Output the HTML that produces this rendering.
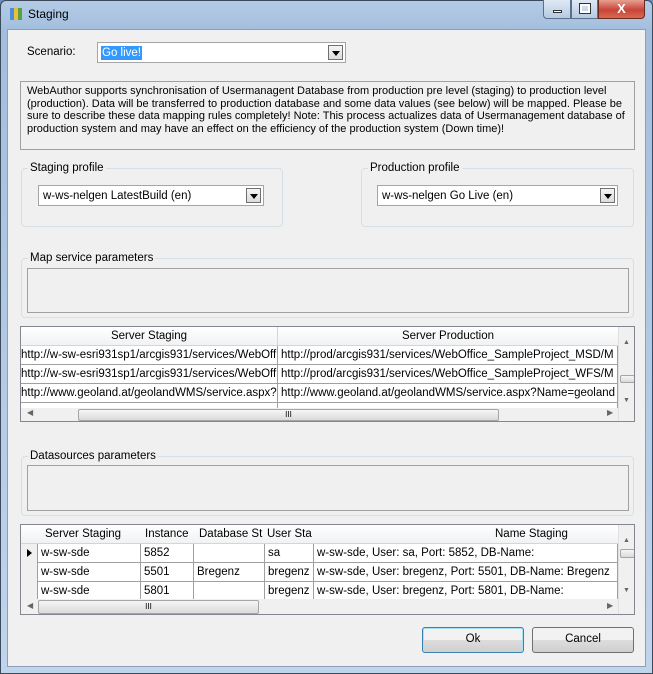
<!DOCTYPE html>
<html><head><style>
*{box-sizing:border-box;margin:0;padding:0}
body{width:653px;height:674px;background:#6d8fb5;font-family:"Liberation Sans",sans-serif;font-size:11.5px;color:#000;position:relative;overflow:hidden}
.a{position:absolute}
.win{left:0;top:0;width:653px;height:674px;background:linear-gradient(#b4cbe6,#a3bedd 30px,#c0d5ec);border:1px solid #3b4a5c;border-radius:6px 6px 0 0}
.body{left:7px;top:29px;width:639px;height:638px;background:#f0f0f0;border:1px solid #8aa0ba}
.combo{background:#fff;border:1px solid #a5a5a5;height:21px}
.btn{position:absolute;right:2px;top:2px;width:15px;height:15px;border:1px solid #6f6f6f;background:linear-gradient(#f4f4f4,#dcdcdc)}
.btn:after{content:"";position:absolute;left:3px;top:5px;border-left:4px solid transparent;border-right:4px solid transparent;border-top:5px solid #000}
.grp{border:1px solid #d5dfe5;border-radius:4px}
.lbl{background:#f0f0f0;padding:0 2px;position:absolute;top:-7px;left:6px}
.grid{background:#fff;border:1px solid #828790;overflow:hidden}
.hd{background:linear-gradient(#fff,#f1f2f4);border-bottom:1px solid #d5d5d5;text-align:center}
.cell{position:absolute;height:19px;line-height:18px;border-right:1px solid #a0a0a0;border-bottom:1px solid #a0a0a0;white-space:nowrap;overflow:hidden;padding-left:3px}
.vs{background:#f0f0f0;border-left:1px solid #e0e0e0}
.hs{background:#f0f0f0}
.thumb{background:linear-gradient(#f6f6f6,#dadada);border:1px solid #a5a5a5;border-radius:2px}
.pb{border:1px solid #707070;border-radius:3px;background:linear-gradient(#f2f2f2 50%,#dddddd 50%,#cfcfcf);text-align:center;line-height:23px}
</style></head><body>
<div class="a win"></div>
<div class="a" style="left:10px;top:8px;width:12px;height:12px;background:linear-gradient(90deg,#4a8fd8 33%,#e8c040 33%,#e8c040 66%,#5aa040 66%)"></div>
<div class="a" style="left:28px;top:7px;font-size:12px">Staging</div>
<div class="a" style="left:543px;top:0;width:28px;height:19px;border:1px solid #5a6f88;border-top:none;border-radius:0 0 0 4px;background:linear-gradient(#dfe9f5,#b6cae3)"><div class="a" style="left:9px;top:10px;width:9px;height:3px;background:#fff;border:1px solid #333"></div></div>
<div class="a" style="left:571px;top:0;width:27px;height:19px;border:1px solid #5a6f88;border-top:none;background:linear-gradient(#dfe9f5,#b6cae3)"><div class="a" style="left:8px;top:4px;width:10px;height:9px;border:2px solid #fff;outline:1px solid #333"></div></div>
<div class="a" style="left:598px;top:0;width:47px;height:19px;border:1px solid #6a2a20;border-top:none;border-radius:0 0 4px 0;background:linear-gradient(#e8a090,#c8443a 55%,#d86a50);color:#fff;font-weight:bold;text-align:center;font-size:13px;line-height:17px">X</div>
<div class="a body"></div>

<div class="a" style="left:27px;top:46px">Scenario:</div>
<div class="a combo" style="left:97px;top:42px;width:249px"><span class="a" style="left:3px;top:3px;background:#3399ff;color:#fff;padding:0 1px;line-height:14px">Go live!</span><div class="btn"></div></div>

<div class="a" style="left:20px;top:81px;width:615px;height:69px;border:1px solid #a0a0a0;padding:3px 0 0 6px;line-height:12.6px;font-size:11px">WebAuthor supports synchronisation of Usermanagent Database from production pre level (staging) to production level (production). Data will be transferred to production database and some data values (see below) will be mapped. Please be sure to describe these data mapping rules completely! Note: This process actualizes data of Usermanagement database of production system and may have an effect on the efficiency of the production system (Down time)!</div>

<div class="a grp" style="left:21px;top:168px;width:262px;height:59px"><span class="lbl">Staging profile</span></div>
<div class="a combo" style="left:38px;top:185px;width:226px"><span class="a" style="left:4px;top:4px">w-ws-nelgen LatestBuild (en)</span><div class="btn"></div></div>
<div class="a grp" style="left:361px;top:168px;width:273px;height:59px"><span class="lbl">Production profile</span></div>
<div class="a combo" style="left:377px;top:185px;width:241px"><span class="a" style="left:4px;top:4px">w-ws-nelgen Go Live (en)</span><div class="btn"></div></div>

<div class="a grp" style="left:21px;top:258px;width:613px;height:60px"><span class="lbl">Map service parameters</span></div>
<div class="a" style="left:27px;top:268px;width:602px;height:45px;border:1px solid #a0a0a0"></div>

<div class="a grid" style="left:20px;top:326px;width:615px;height:96px">
 <div class="a hd" style="left:0;top:0;width:257px;height:19px;line-height:18px;border-right:1px solid #d5d5d5">Server Staging</div>
 <div class="a hd" style="left:257px;top:0;width:340px;height:19px;line-height:18px">Server Production</div>
 <div class="cell" style="left:0;top:19px;width:257px;padding-left:0">http://w-sw-esri931sp1/arcgis931/services/WebOff</div>
 <div class="cell" style="left:257px;top:19px;width:340px">http://prod/arcgis931/services/WebOffice_SampleProject_MSD/M</div>
 <div class="cell" style="left:0;top:38px;width:257px;padding-left:0">http://w-sw-esri931sp1/arcgis931/services/WebOff</div>
 <div class="cell" style="left:257px;top:38px;width:340px">http://prod/arcgis931/services/WebOffice_SampleProject_WFS/M</div>
 <div class="cell" style="left:0;top:57px;width:257px;padding-left:0">http://www.geoland.at/geolandWMS/service.aspx?</div>
 <div class="cell" style="left:257px;top:57px;width:340px">http://www.geoland.at/geolandWMS/service.aspx?Name=geoland</div>
 <div class="cell" style="left:0;top:76px;width:257px"></div>
 <div class="cell" style="left:257px;top:76px;width:340px"></div>
 <div class="a hs" style="left:0;top:81px;width:597px;height:14px"><div class="a thumb" style="left:57px;top:1px;width:421px;height:12px;text-align:center;font-size:8px;line-height:10px">III</div><span class="a" style="left:6px;top:0;font-size:8px;color:#666">◀</span><span class="a" style="left:586px;top:0;font-size:8px;color:#666">▶</span></div>
 <div class="a vs" style="left:597px;top:0;width:17px;height:95px"><div class="a thumb" style="left:1px;top:48px;width:15px;height:8px"></div><span class="a" style="left:4px;top:12px;font-size:7px;color:#666">▲</span><span class="a" style="left:4px;top:70px;font-size:7px;color:#666">▼</span></div>
</div>

<div class="a grp" style="left:21px;top:456px;width:613px;height:60px"><span class="lbl">Datasources parameters</span></div>
<div class="a" style="left:27px;top:465px;width:602px;height:46px;border:1px solid #a0a0a0"></div>

<div class="a grid" style="left:20px;top:524px;width:615px;height:91px">
 <div class="a hd" style="left:0;top:0;width:597px;height:19px"></div>
 <div class="a" style="left:24px;top:3px">Server Staging</div>
 <div class="a" style="left:124px;top:3px">Instance</div>
 <div class="a" style="left:178px;top:3px">Database St</div>
 <div class="a" style="left:246px;top:3px">User Sta</div>
 <div class="a" style="left:474px;top:3px">Name Staging</div>
 <div class="a" style="left:0;top:19px;width:17px;height:57px;background:#f0f0f0;border-right:1px solid #a0a0a0"></div>
 <div class="a" style="left:6px;top:24px;border-top:4px solid transparent;border-bottom:4px solid transparent;border-left:5px solid #000"></div>
 <div class="cell" style="left:17px;top:19px;width:103px">w-sw-sde</div><div class="cell" style="left:120px;top:19px;width:53px">5852</div><div class="cell" style="left:173px;top:19px;width:71px"></div><div class="cell" style="left:244px;top:19px;width:49px">sa</div><div class="cell" style="left:293px;top:19px;width:304px">w-sw-sde, User: sa, Port: 5852, DB-Name:</div>
 <div class="cell" style="left:17px;top:38px;width:103px">w-sw-sde</div><div class="cell" style="left:120px;top:38px;width:53px">5501</div><div class="cell" style="left:173px;top:38px;width:71px">Bregenz</div><div class="cell" style="left:244px;top:38px;width:49px">bregenz</div><div class="cell" style="left:293px;top:38px;width:304px">w-sw-sde, User: bregenz, Port: 5501, DB-Name: Bregenz</div>
 <div class="cell" style="left:17px;top:57px;width:103px">w-sw-sde</div><div class="cell" style="left:120px;top:57px;width:53px">5801</div><div class="cell" style="left:173px;top:57px;width:71px"></div><div class="cell" style="left:244px;top:57px;width:49px">bregenz</div><div class="cell" style="left:293px;top:57px;width:304px">w-sw-sde, User: bregenz, Port: 5801, DB-Name:</div>
 <div class="a hs" style="left:0;top:74px;width:597px;height:16px"><div class="a thumb" style="left:17px;top:1px;width:221px;height:14px;text-align:center;font-size:8px;line-height:12px">III</div><span class="a" style="left:6px;top:2px;font-size:8px;color:#666">◀</span><span class="a" style="left:586px;top:2px;font-size:8px;color:#666">▶</span></div>
 <div class="a vs" style="left:597px;top:0;width:17px;height:90px"><div class="a thumb" style="left:1px;top:24px;width:15px;height:9px"></div><span class="a" style="left:4px;top:12px;font-size:7px;color:#666">▲</span><span class="a" style="left:4px;top:62px;font-size:7px;color:#666">▼</span></div>
</div>

<div class="a pb" style="left:422px;top:627px;width:102px;height:26px;border-color:#3c7fb1;box-shadow:inset 0 0 0 1px #a8e0f8">Ok</div>
<div class="a pb" style="left:532px;top:627px;width:102px;height:26px">Cancel</div>
</body></html>
